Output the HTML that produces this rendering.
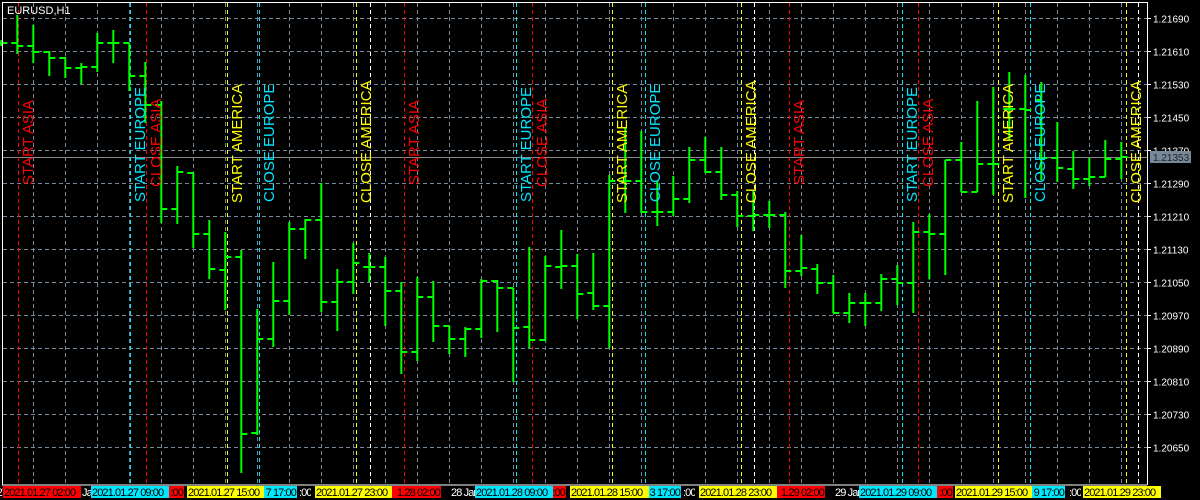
<!DOCTYPE html>
<html><head><meta charset="utf-8">
<style>
html,body{margin:0;padding:0;background:#000;width:1200px;height:500px;overflow:hidden}
svg{display:block}
text{font-family:"Liberation Sans",Arial,sans-serif}
</style></head>
<body>
<svg id="s" width="1200" height="500" xmlns="http://www.w3.org/2000/svg">
<rect width="1200" height="500" fill="#000"/>
<g id="grid"></g>
<g id="sess"></g>
<g id="bars"></g>
<g id="labels"></g>
<line x1="2" y1="485" x2="1147" y2="485" stroke="#fff" stroke-width="1"/>
<line x1="1147.5" y1="2" x2="1147.5" y2="485" stroke="#fff" stroke-width="1"/>
<line x1="2.5" y1="2" x2="2.5" y2="485" stroke="#fff" stroke-width="1"/>
<line x1="2" y1="2.5" x2="1147" y2="2.5" stroke="#fff" stroke-width="1"/>
<text x="7" y="14" fill="#fff" font-size="11">EURUSD,H1</text>
<g id="axis"></g>
<rect x="1150" y="151" width="41" height="12" fill="#778899"/>
<text x="1153" y="161" fill="#222" font-size="10">1.21353</text>
<g id="bottom"></g>
</svg>
<script>
var NS="http://www.w3.org/2000/svg";
function el(p,t,a,tx){var e=document.createElementNS(NS,t);for(var k in a)e.setAttribute(k,a[k]);if(tx!=null)e.textContent=tx;document.getElementById(p).appendChild(e);return e;}
for(var k=0;k<14;k++){var y=18.5+33*k;el("grid","line",{x1:3,y1:y,x2:1147,y2:y,stroke:"#778899","stroke-dasharray":"4 3"});}
for(var x=33.5;x<1147;x+=32){el("grid","line",{x1:x,y1:3,x2:x,y2:485,stroke:"#778899","stroke-dasharray":"4 3"});}
el("grid","line",{x1:3,y1:157.5,x2:1147,y2:157.5,stroke:"#8a8a8a"});
[370,754,1138].forEach(function(x){el("grid","line",{x1:x+.5,y1:3,x2:x+.5,y2:485,stroke:"#fff","stroke-dasharray":"4 3"});});
var R="#ff0000",C="#00e8ff",Y="#ffff00";
var S=[[18,R,"START ASIA",185],[130,C,"START EUROPE",202],[146,R,"CLOSE ASIA",187],[227,Y,"START AMERICA",203],[259,C,"CLOSE EUROPE",202],
[356,Y,"CLOSE AMERICA",203],[404,R,"START ASIA",185],[516,C,"START EUROPE",202],[532,R,"CLOSE ASIA",187],[612,Y,"START AMERICA",203],[645,C,"CLOSE EUROPE",202],
[741,Y,"CLOSE AMERICA",203],[789,R,"START ASIA",185],[902,C,"START EUROPE",202],[918,R,"CLOSE ASIA",187],[998,Y,"START AMERICA",203],[1030,C,"CLOSE EUROPE",202],[1126,Y,"CLOSE AMERICA",203]];
S.forEach(function(s){el("sess","line",{x1:s[0]+.5,y1:3,x2:s[0]+.5,y2:485,stroke:s[1],"stroke-dasharray":"4 3"});});
var B=[[40,46,43,43],[15,54,43,46],[25,63,46,52],[51,76,52,58],[57,78,58,68],[63,84,68,67],[33,72,67,43],[30,63,43,43],[43,91,43,76],[62,123,76,105],
[101,223,105,209],[166,224,209,172],[173,248,173,234],[220,279,234,269],[232,310,270,257],[250,473,257,434],[309,435,433,339],[262,347,339,301],[222,315,301,229],[219,259,229,220],
[183,312,220,302],[269,331,302,282],[243,294,282,263],[253,282,267,267],[257,326,267,291],[282,374,291,352],[277,361,352,297],[281,342,297,326],[326,354,326,339],[327,357,339,329],
[279,338,329,281],[280,332,281,288],[288,382,288,328],[247,348,327,340],[256,341,340,266],[230,289,267,266],[254,319,266,294],[253,310,293,306],[175,348,306,181],[128,213,181,181],
[131,213,181,212],[181,226,212,212],[176,216,212,199],[147,203,199,160],[137,173,160,172],[147,200,172,195],[191,227,195,216],[191,231,216,215],[201,228,215,215],[212,288,215,271],
[235,276,271,268],[264,294,269,283],[275,313,283,313],[293,323,313,303],[293,326,303,303],[274,311,303,279],[265,305,279,283],[222,313,283,232],[214,279,232,234],[160,275,234,160],
[142,192,160,192],[101,192,192,164],[87,195,164,164],[72,140,109,109],[75,198,109,110],[82,180,100,158],[122,182,158,168],[151,189,169,179],[158,186,179,177],[140,177,177,159],[142,179,159,157]];
var G="#00ff00";
B.forEach(function(b,i){var x=17.3+16*(i-1);
el("bars","line",{x1:x,y1:b[0],x2:x,y2:b[1],stroke:G,"stroke-width":2});
el("bars","line",{x1:x-6,y1:b[2],x2:x,y2:b[2],stroke:G,"stroke-width":2});
el("bars","line",{x1:x,y1:b[3],x2:x+6,y2:b[3],stroke:G,"stroke-width":2});});
S.forEach(function(s){el("labels","text",{x:0,y:0,fill:s[1],"font-size":15,transform:"translate("+(s[0]+15)+","+s[3]+") rotate(-90)"},s[2]);});
var P=["1.21690","1.21610","1.21530","1.21450","1.21370","1.21290","1.21210","1.21130","1.21050","1.20970","1.20890","1.20810","1.20730","1.20650"];
P.forEach(function(p,k){var y=18.5+33*k;el("axis","line",{x1:1147,y1:y,x2:1151,y2:y,stroke:"#fff"});el("axis","text",{x:1153,y:y+4,fill:"#fff","font-size":10},p);});
var L=[[-40,43,"none","2021.01.27 0","#fff"],[3,78,R,"2021.01.27 02:00","#000"],[81,10,"none","Jan","#fff"],[91,78,C,"2021.01.27 09:00","#000"],[169,15,R,":00","#000"],
[187,77,Y,"2021.01.27 15:00","#000"],[264,33,C,"7 17:00","#000"],[298,13,"none",":00","#fff"],[315,77,Y,"2021.01.27 23:00","#000"],[392,49,R,"1.28 02:00","#000"],
[450,25,"none","28 Jan","#fff"],[475,78,C,"2021.01.28 09:00","#000"],[553,13,R,":00","#000"],[570,79,Y,"2021.01.28 15:00","#000"],[649,32,C,"3 17:00","#000"],[682,13,"none",":00","#fff"],
[699,78,Y,"2021.01.28 23:00","#000"],[777,48,R,"1.29 02:00","#000"],[834,25,"none","29 Jan","#fff"],[859,78,C,"2021.01.29 09:00","#000"],[937,16,R,":00","#000"],
[955,77,Y,"2021.01.29 15:00","#000"],[1032,33,C,"9 17:00","#000"],[1068,13,"none",":00","#fff"],[1083,78,Y,"2021.01.29 23:00","#000"]];
L.forEach(function(l,k){var cid="c"+k;
var cp=el("bottom","clipPath",{id:cid});var r=document.createElementNS(NS,"rect");r.setAttribute("x",l[0]);r.setAttribute("y",486);r.setAttribute("width",l[1]);r.setAttribute("height",12);cp.appendChild(r);
if(l[2]!="none")el("bottom","rect",{x:l[0],y:486,width:l[1],height:12,fill:l[2]});
var tx=l[0]+1;if(l[3].length<16&&l[2]!="none"&&l[3][0]!="2")tx=l[0]+l[1]-1;
var t=el("bottom","text",{x:tx,y:496,fill:l[4],"font-size":11,"letter-spacing":"-0.9","clip-path":"url(#"+cid+")"},l[3]);
if(tx!=l[0]+1)t.setAttribute("text-anchor","end");});
</script>
</body></html>
